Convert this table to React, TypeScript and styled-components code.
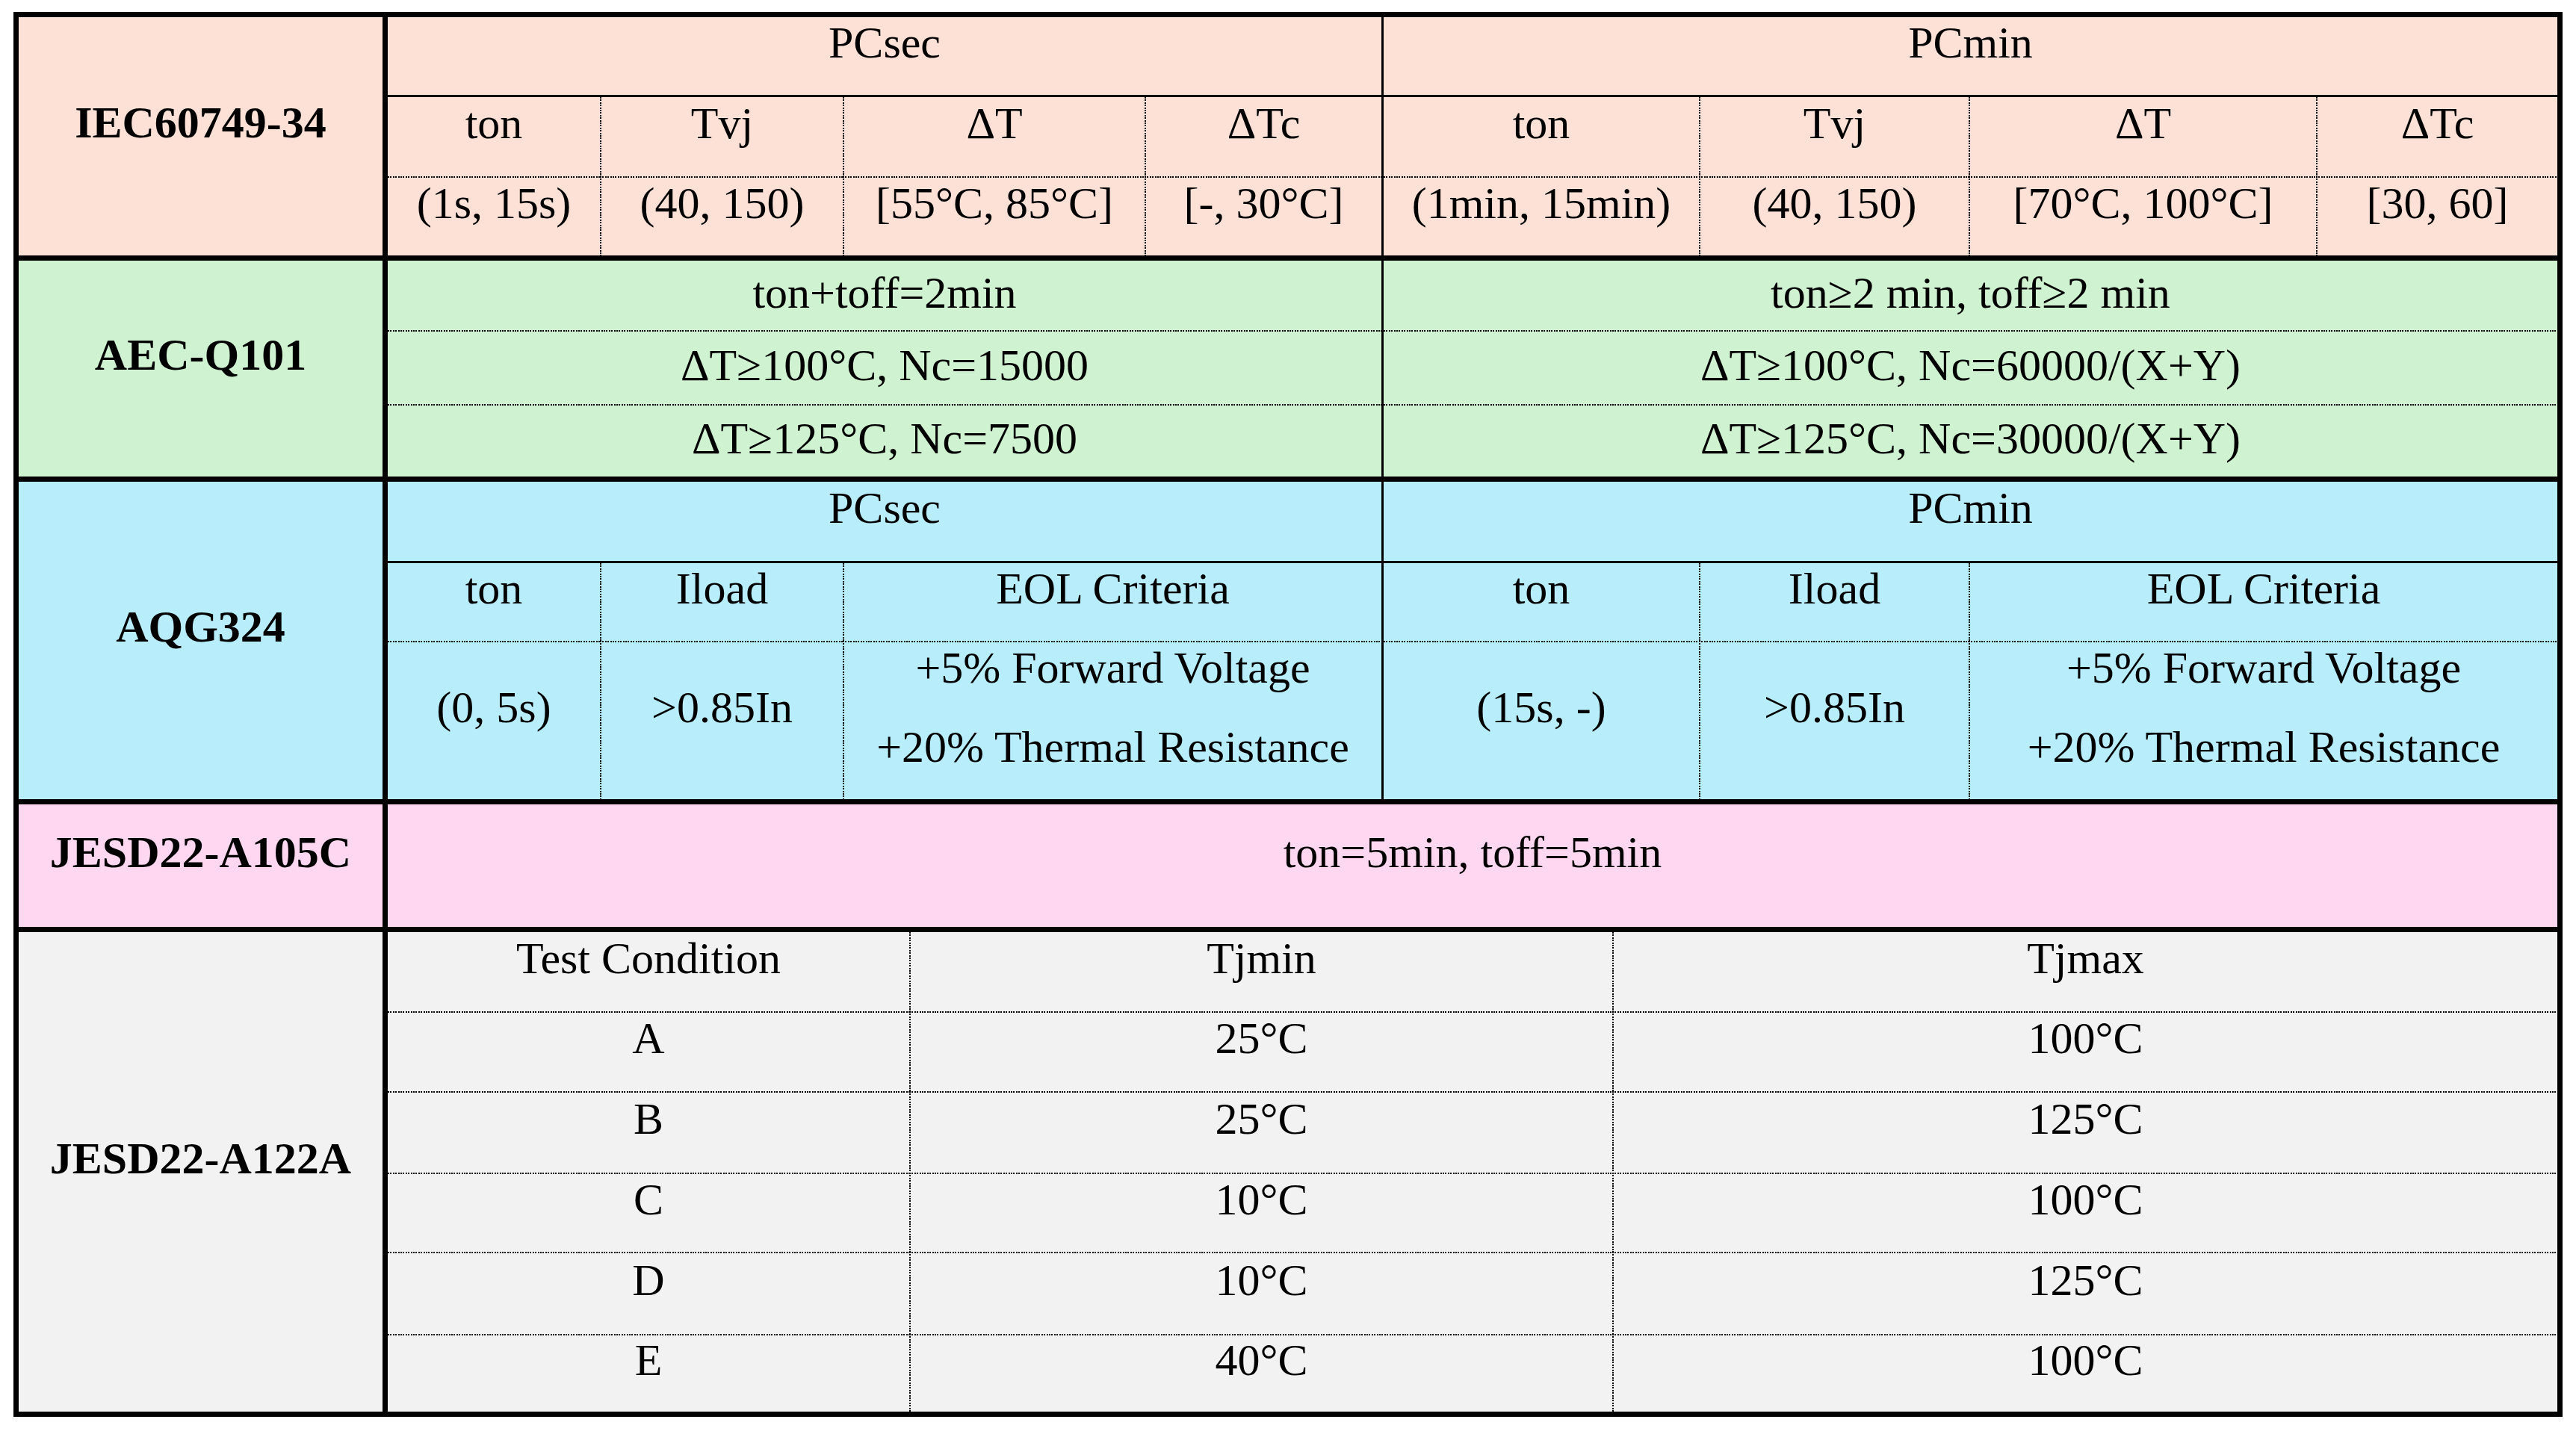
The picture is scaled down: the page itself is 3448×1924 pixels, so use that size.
import React from 'react';
import styled, { createGlobalStyle } from 'styled-components';

const GlobalStyle = createGlobalStyle`
  html, body { margin: 0; padding: 0; background: #ffffff; }
  body { font-family: "Liberation Serif", "Times New Roman", serif; color: #000000; }
`;

const Page = styled.div`
  padding: 16px 0 0 18px;
`;

const Table = styled.div`
  width: 3412px;
  box-sizing: border-box;
  border: 7px solid #000;
  display: flex;
  flex-direction: column;
  font-size: 60px;
  line-height: 1.15;
`;

const Section = styled.section<{ $bg: string; $h: number }>`
  display: grid;
  grid-template-columns: 494px 1fr;
  height: ${(p) => p.$h}px;
  background: ${(p) => p.$bg};
  & + & {
    border-top: 7px solid #000;
  }
`;

const Label = styled.div`
  box-sizing: border-box;
  border-right: 7px solid #000;
  display: flex;
  align-items: center;
  justify-content: center;
  padding-bottom: 36px;
  font-weight: 700;
  white-space: nowrap;
`;

const Grid = styled.div<{ $cols: string; $rows: string }>`
  display: grid;
  grid-template-columns: ${(p) => p.$cols};
  grid-template-rows: ${(p) => p.$rows};
  min-width: 0;
`;

type Line = 'solid' | 'dotted' | undefined;

const H_DOTS = 'repeating-linear-gradient(90deg, #000 0 2px, transparent 2px 3.4px)';
const V_DOTS = 'repeating-linear-gradient(180deg, #000 0 2px, transparent 2px 3.4px)';

const dotImages = (top: Line, left: Line) => {
  const imgs: string[] = [];
  const sizes: string[] = [];
  const pos: string[] = [];
  if (top === 'dotted') {
    imgs.push(H_DOTS);
    sizes.push('100% 2px');
    pos.push('left top');
  }
  if (left === 'dotted') {
    imgs.push(V_DOTS);
    sizes.push('2px 100%');
    pos.push('left top');
  }
  if (!imgs.length) return '';
  return `
    background-image: ${imgs.join(', ')};
    background-size: ${sizes.join(', ')};
    background-position: ${pos.join(', ')};
    background-repeat: no-repeat;
  `;
};

const Cell = styled.div<{ $top?: Line; $left?: Line; $span?: number; $pb?: number }>`
  grid-column: span ${(p) => p.$span ?? 1};
  box-sizing: border-box;
  display: flex;
  flex-direction: column;
  align-items: center;
  justify-content: center;
  gap: 37px;
  padding-bottom: ${(p) => p.$pb ?? 36}px;
  padding-top: ${(p) => (p.$top === 'dotted' ? 2 : 0)}px;
  padding-left: ${(p) => (p.$left === 'dotted' ? 2 : 0)}px;
  text-align: center;
  white-space: nowrap;
  border-top: ${(p) => (p.$top === 'solid' ? '3px solid #000' : 'none')};
  border-left: ${(p) => (p.$left === 'solid' ? '3px solid #000' : 'none')};
  ${(p) => dotImages(p.$top, p.$left)}
`;

const Para = styled.span`
  display: block;
`;

const iecHead = ['ton', 'Tvj', 'ΔT', 'ΔTc', 'ton', 'Tvj', 'ΔT', 'ΔTc'];
const iecVals = [
  '(1s, 15s)',
  '(40, 150)',
  '[55°C, 85°C]',
  '[-, 30°C]',
  '(1min, 15min)',
  '(40, 150)',
  '[70°C, 100°C]',
  '[30, 60]',
];

const aecRows: [string, string][] = [
  ['ton+toff=2min', 'ton≥2 min, toff≥2 min'],
  ['ΔT≥100°C, Nc=15000', 'ΔT≥100°C, Nc=60000/(X+Y)'],
  ['ΔT≥125°C, Nc=7500', 'ΔT≥125°C, Nc=30000/(X+Y)'],
];

const aqgHead = ['ton', 'Iload', 'EOL Criteria', 'ton', 'Iload', 'EOL Criteria'];
const aqgVals: string[][] = [
  ['(0, 5s)'],
  ['>0.85In'],
  ['+5% Forward Voltage', '+20% Thermal Resistance'],
  ['(15s, -)'],
  ['>0.85In'],
  ['+5% Forward Voltage', '+20% Thermal Resistance'],
];

const jesdRows: [string, string, string][] = [
  ['Test Condition', 'Tjmin', 'Tjmax'],
  ['A', '25°C', '100°C'],
  ['B', '25°C', '125°C'],
  ['C', '10°C', '100°C'],
  ['D', '10°C', '125°C'],
  ['E', '40°C', '100°C'],
];

const sideLine = (i: number, half: number): Line =>
  i === 0 ? undefined : i === half ? 'solid' : 'dotted';

export default function App() {
  return (
    <>
      <GlobalStyle />
      <Page>
        <Table>
          <Section $bg="#fde1d7" $h={319}>
            <Label>IEC60749-34</Label>
            <Grid
              $cols="284px 325px 404px 317px 425px 361px 465px 323px"
              $rows="104px 109px 106px"
            >
              <Cell $span={4}>PCsec</Cell>
              <Cell $span={4} $left="solid">
                PCmin
              </Cell>
              {iecHead.map((t, i) => (
                <Cell key={'h' + i} $top="solid" $left={sideLine(i, 4)}>
                  {t}
                </Cell>
              ))}
              {iecVals.map((t, i) => (
                <Cell key={'v' + i} $top="dotted" $left={sideLine(i, 4)}>
                  {t}
                </Cell>
              ))}
            </Grid>
          </Section>

          <Section $bg="#cff2d1" $h={289}>
            <Label>AEC-Q101</Label>
            <Grid $cols="1330px 1574px" $rows="93px 99px 97px">
              {aecRows.map((r, ri) =>
                r.map((t, i) => (
                  <Cell
                    key={ri + '-' + i}
                    $pb={6}
                    $top={ri === 0 ? undefined : 'dotted'}
                    $left={i === 1 ? 'solid' : undefined}
                  >
                    {t}
                  </Cell>
                ))
              )}
            </Grid>
          </Section>

          <Section $bg="#b8edfb" $h={425}>
            <Label>AQG324</Label>
            <Grid $cols="284px 325px 721px 425px 361px 788px" $rows="106px 107px 212px">
              <Cell $span={3}>PCsec</Cell>
              <Cell $span={3} $left="solid">
                PCmin
              </Cell>
              {aqgHead.map((t, i) => (
                <Cell key={'h' + i} $top="solid" $left={sideLine(i, 3)}>
                  {t}
                </Cell>
              ))}
              {aqgVals.map((lines, i) => (
                <Cell key={'v' + i} $top="dotted" $left={sideLine(i, 3)}>
                  {lines.map((l) => (
                    <Para key={l}>{l}</Para>
                  ))}
                </Cell>
              ))}
            </Grid>
          </Section>

          <Section $bg="#ffd7f0" $h={164}>
            <Label>JESD22-A105C</Label>
            <Grid $cols="1fr" $rows="164px">
              <Cell>ton=5min, toff=5min</Cell>
            </Grid>
          </Section>

          <Section $bg="#f2f2f2" $h={642}>
            <Label>JESD22-A122A</Label>
            <Grid $cols="698px 941px 1265px" $rows="106px 107px 109px 106px 110px 104px">
              {jesdRows.map((r, ri) =>
                r.map((t, i) => (
                  <Cell
                    key={ri + '-' + i}
                    $top={ri === 0 ? undefined : 'dotted'}
                    $left={i === 0 ? undefined : 'dotted'}
                  >
                    {t}
                  </Cell>
                ))
              )}
            </Grid>
          </Section>
        </Table>
      </Page>
    </>
  );
}
